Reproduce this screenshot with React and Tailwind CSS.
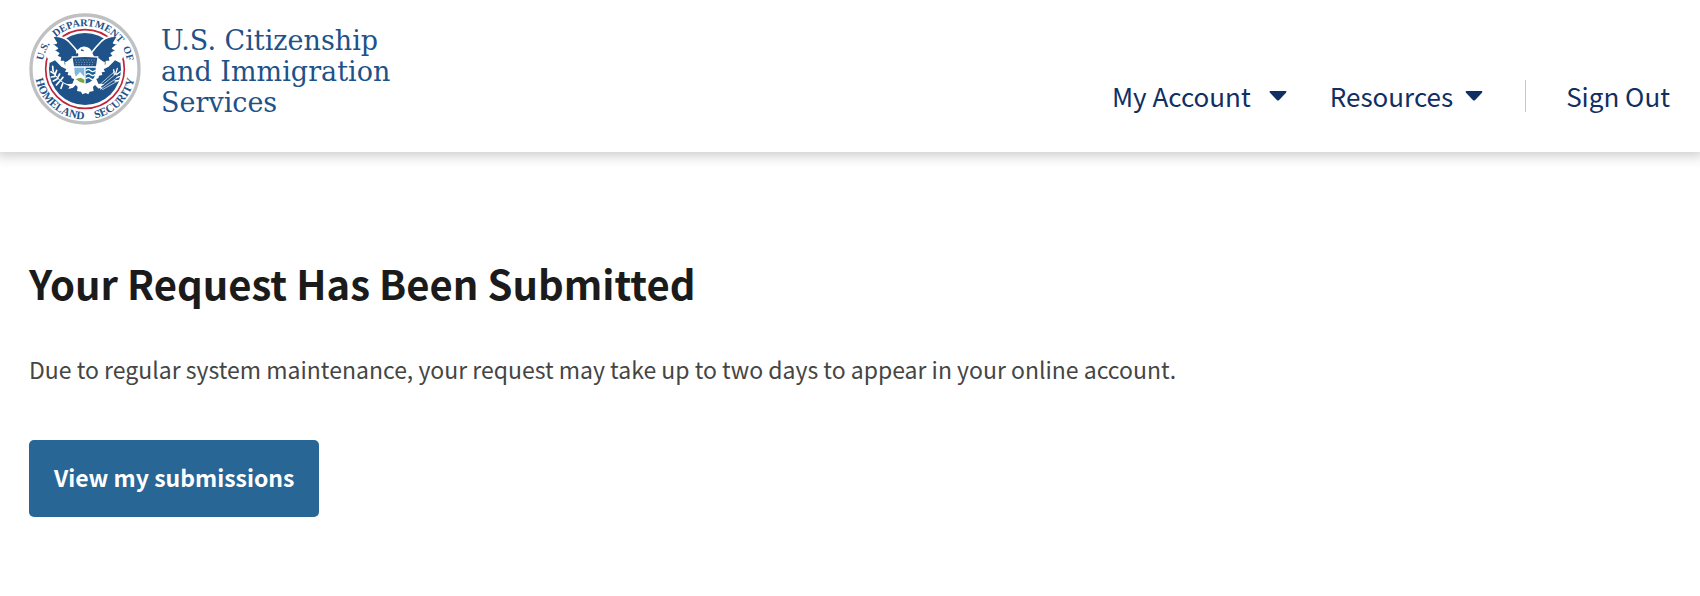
const WING =
  "M-98 -98 Q-70 -101 -50 -84 Q-32 -66 -16 -44 L-18 -32 L-40 -30 L-50 -22 L-54 -12 L-64 -10 L-64 -22 L-76 -22 L-74 -34 L-86 -38 L-79 -47 L-93 -56 L-83 -62 L-98 -74 L-86 -78 Z";

function Seal() {
  return (
    <svg
      viewBox="-168 -168 336 336"
      className="size-28 shrink-0"
      role="img"
      aria-label="U.S. Department of Homeland Security seal"
    >
      <defs>
        <path id="arc-top" d="M-129 0 A129 129 0 0 1 129 0" />
        <path id="arc-bottom" d="M-151 0 A151 151 0 0 0 151 0" />
      </defs>
      <circle r="162" fill="#fff" stroke="#bfc0c2" strokeWidth="10" />
      <circle r="118" fill="none" stroke="#c0253a" strokeWidth="5" />
      <circle r="108" fill="#1f5288" />

      {/* wings */}
      {["scale(1 1)", "scale(-1 1)"].map((t) => (
        <g key={t} transform={t}>
          <path
            d="M-124 -58 L-104 -100 L-96 -96 L-68 -42 L-60 -24 L-50 0 L-70 -6 L-90 -26 L-106 -18 Z"
            fill="#fff"
          />
          <path d={WING} fill="#1f5288" stroke="#fff" strokeWidth="5" strokeLinejoin="round" />
          <path
            d="M-30 -36 L-46 -26 L-60 -20 L-58 -10 L-66 -4 L-56 0 L-60 8 L-50 10 L-52 18 L-42 20 L-40 28 L-32 30 Z"
            fill="#fff"
          />
        </g>
      ))}

      {/* tail and talons */}
      <path
        d="M-32 30 L-38 44 L-56 46 L-46 52 L-50 60 L-36 56 L-28 48 L-22 54 L-24 66 L-12 68 L-8 76 L2 72 L10 76 L14 68 L26 66 L24 54 L30 48 L38 56 L52 60 L48 52 L58 46 L40 44 L34 30 Z"
        fill="#fff"
      />

      {/* head */}
      <path
        d="M-22 -36 Q-20 -42 -18 -49 Q-24 -50 -24 -44 Q-32 -54 -20 -59 Q-12 -70 2 -67 Q18 -64 21 -50 L28 -36 Z"
        fill="#fff"
      />
      <path d="M-12 -57 L-4 -55" stroke="#1f5288" strokeWidth="4" />

      {/* shield */}
      <path d="M-40 -38 H40 V10 Q38 40 0 52 Q-38 40 -40 10 Z" fill="#fff" />
      <path d="M-37 -34 Q0 -38 37 -34 L33 -8 H-33 Z" fill="#1f5288" />
      <path d="M-30 -27 H32 M-27 -20 H30 M-28 -13 H28" stroke="#c3d4e4" strokeWidth="2" strokeDasharray="3 5" />
      <path d="M-32 -4 H-2 V28 H-26 Q-33 14 -32 -4 Z" fill="#7fb9dd" />
      <path d="M-31 27 L-15 9 L-1 25 V30 H-28 Z" fill="#fff" />
      <path d="M-28 30 L-13 26 L-2 32 V43 Q-18 40 -28 30 Z" fill="#77a843" />
      <path d="M2 -4 H32 Q33 14 26 30 Q18 40 2 44 Z" fill="#1f6197" />
      <path
        d="M3 5 Q10 -1 17 5 T32 4 M3 17 Q10 11 17 17 T31 16 M3 29 Q10 23 17 29 T28 28"
        fill="none"
        stroke="#fff"
        strokeWidth="4"
      />

      {/* olive branch */}
      <g stroke="#fff" strokeLinecap="round" fill="none">
        <path d="M-96 4 Q-84 38 -46 50" strokeWidth="3" />
        <path
          d="M-92 14 L-102 8 M-90 22 L-101 24 M-84 30 L-95 36 M-77 38 L-86 48 M-67 44 L-72 58 M-90 18 L-85 4 M-83 28 L-76 15 M-74 35 L-66 25 M-96 4 L-97 -8"
          strokeWidth="5"
        />
      </g>

      {/* arrows */}
      <g stroke="#fff" strokeLinecap="round" fill="none">
        <path d="M40 58 L94 14 M46 61 L101 23 M52 62 L104 33 M40 51 L88 8" strokeWidth="2" />
        <path d="M92 14 L97 -2 M94 17 L106 8 M96 26 L107 21 M88 16 L86 2 M90 36 L102 34" strokeWidth="4" />
      </g>

      <g
        fill="#1f5288"
        fontFamily="'Liberation Serif', serif"
        fontWeight="700"
        fontSize="31"
        textAnchor="middle"
      >
        <text><textPath href="#arc-top" startOffset="13%">U.S.</textPath></text>
        <text><textPath href="#arc-top" startOffset="53%">DEPARTMENT</textPath></text>
        <text><textPath href="#arc-top" startOffset="89%">OF</textPath></text>
        <text fontSize="34"><textPath href="#arc-bottom" startOffset="28%">HOMELAND</textPath></text>
        <text fontSize="34"><textPath href="#arc-bottom" startOffset="75%">SECURITY</textPath></text>
      </g>
    </svg>
  );
}

function Caret() {
  return (
    <svg viewBox="0 0 18 10" className="h-[10px] w-[18px]" fill="#112f63" aria-hidden="true">
      <path d="M1.2 0 H16.8 Q18 .5 17 1.7 L10.2 8.9 Q9 10 7.8 8.9 L1 1.7 Q0 .5 1.2 0 Z" />
    </svg>
  );
}

export default function App() {
  return (
    <div className="min-h-screen bg-white font-['Noto_Sans_CJK_SC','Noto_Sans',sans-serif]">
      <header className="flex items-end justify-between bg-white pt-[13px] pr-[30px] pb-[27px] pl-[29px] shadow-[0_0_12px_4px_rgba(0,0,0,0.2)]">
        <a href="#home" className="flex items-center gap-5">
          <Seal />
          <span className="flex flex-col pt-1 font-['DejaVu_Serif',serif] text-[27px] leading-[31px] text-[#1f5288]">
            <span>U.S. Citizenship</span>
            <span>and Immigration</span>
            <span>Services</span>
          </span>
        </a>
        <nav className="flex items-center pb-[9px] text-[26px] leading-[40px] text-[#112f63]">
          <button type="button" className="flex items-center gap-[18px]">
            My Account
            <Caret />
          </button>
          <button type="button" className="ml-[43px] flex items-center gap-3">
            Resources
            <Caret />
          </button>
          <span className="ml-[42px] h-8 w-px bg-[#c6c6c6]" />
          <a href="#sign-out" className="ml-[40px]">
            Sign Out
          </a>
        </nav>
      </header>
      <main className="px-[29px] pt-[101px]">
        <h1 className="text-[40px] leading-[60px] font-bold text-[#1b1b1b]">
          Your Request Has Been Submitted
        </h1>
        <p className="mt-[36px] text-[23px] leading-[40px] text-[#454545]">
          Due to regular system maintenance, your request may take up to two days to appear in your
          online account.
        </p>
        <button
          type="button"
          className="mt-[51px] rounded-[5px] bg-[#286696] px-[25px] pt-[19px] pb-[21px] text-[23px] leading-[37px] font-bold text-white"
        >
          View my submissions
        </button>
      </main>
    </div>
  );
}
